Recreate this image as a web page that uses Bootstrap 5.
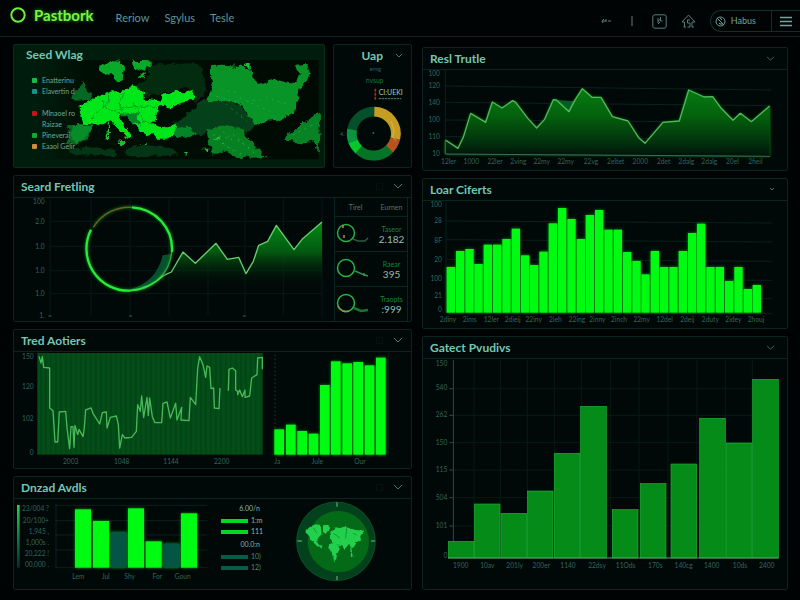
<!DOCTYPE html>
<html lang="en" data-bs-theme="dark">
<head>
<meta charset="utf-8">
<meta name="viewport" content="width=device-width, initial-scale=1">
<title>Pastbork</title>
<link href="https://cdn.jsdelivr.net/npm/bootstrap@5.3.0/dist/css/bootstrap.min.css" rel="stylesheet">
<style>
:root{--line:#0a2521;--title:#74c6b4;--label:#34635a;--neon:#00fb12}
body{background:#000304;color:var(--title);font-family:Lato,"Liberation Sans",sans-serif;font-size:12px;line-height:16px}
svg{display:block}
button{background:none;border:0;padding:0;color:inherit;font:inherit;line-height:inherit}
.topbar{height:37px;border-bottom:1px solid #10241f;background:#000405;padding:0 0 0 10px}
.brand-group{gap:22px;padding-bottom:6px}
.brand-link{gap:8px;color:#7af542;font-size:15px;font-weight:700;text-shadow:0 0 4px #2c9a10}
.menu-link{color:#5e9699;font-size:11px;padding-top:5px}
.menu{gap:15px}
.tools{gap:14px;color:#55807a;padding-top:6px}
.pill{border:1px solid #0e3029;border-right:0;border-radius:11px 0 0 11px;height:22px}
.pill-user{gap:5px;padding:0 15px 0 4px;font-size:9px;color:#76a29a}
.pill-menu{border-left:1px solid #0e3029;padding:0 8px;color:#76a29a}
.board{display:grid;grid-template-columns:399fr 366fr;gap:10px;padding:7px 12px 9px 13px}
.stack{display:flex;flex-direction:column;gap:7px;min-width:0}
.stack-right{padding-top:3px}
.top-row{display:grid;grid-template-columns:312fr 79fr;gap:8px}
.panel{border:1px solid var(--line);border-radius:2px;background:#010908;min-width:0;position:relative}
.panel-head{height:22px;padding:0 8px 0 7px;border-bottom:1px solid var(--line)}
.panel-head h2,.map-over h2{font-size:12px;line-height:16px;font-weight:700;margin:0;color:var(--title)}
.chev{color:#3f7a6d}
.ghost{width:7px;height:7px;border:1px solid #03110f;margin-right:10px}
.chart{width:100%;height:auto;overflow:visible}
.chart text{font-size:20px;fill:var(--label)}
.map-panel{background:#001c0c;border-color:#04301a}
.map-over{position:absolute;inset:0;padding:2px 0 0 12px}
.map-key{list-style:none;margin:12px 0 0;padding:0 0 0 6px;font-size:7px;line-height:11px;color:#70a896}
.map-key li{display:flex;align-items:start;gap:5px}
.map-key i{width:5px;height:5px;margin-top:3px;border-radius:1px}
.split{display:grid;grid-template-columns:320fr 77fr}
.stats{width:calc(100% - 3px);height:100%;font-size:7px;line-height:10px;border-left:1px solid var(--line);border-right:1px solid var(--line);color:#4b776e;text-align:center}
.stats tr{border-bottom:1px solid var(--line)}
.stats th{font-weight:400;height:18px}
.stats td{height:35px;padding:0}
.stats b{display:block;font-size:10px;font-weight:400;color:#94bfb4}
.stats .name{color:#15823c}
.trio{display:grid;grid-template-columns:207fr 47fr 143fr}
.rates{font-size:7px;line-height:11px;color:#86b5a8;padding-top:2px}
.rates div{display:flex;align-items:center;gap:3px}
.rates p{margin:0;text-align:right;line-height:14px}
.rates i{width:27px;height:4px;background:#00d824}
.rates .cool i{background:#075b49}
.rates .cool{color:#4b8576}
.glow{filter:drop-shadow(0 0 5px #00a010)}
</style>
</head>
<body>
<nav class="topbar d-flex justify-content-between align-items-center">
  <div class="brand-group d-flex align-items-center">
    <a href="#" class="brand-link d-flex align-items-center text-decoration-none">
      <svg width="16" height="16" viewBox="0 0 16 16" fill="none" stroke="#6df03a" stroke-width="2"><circle cx="8" cy="8" r="6.7"/></svg>Pastbork</a>
    <div class="menu d-flex">
      <a href="#" class="menu-link text-decoration-none">Reriow</a>
      <a href="#" class="menu-link text-decoration-none">Sgylus</a>
      <a href="#" class="menu-link text-decoration-none">Tesle</a>
    </div>
  </div>
  <div class="tools d-flex align-items-center">
    <button aria-label="Back"><svg width="11" height="8" viewBox="0 0 11 8" fill="none" stroke="currentColor"><path d="M1 4h4M3 2 1 4l1 2M5 2v3M7 4h3"/></svg></button>
    <button aria-label="Marker"><svg width="12" height="12" viewBox="0 0 12 12" stroke="currentColor"><path d="M6 1v10"/></svg></button>
    <button aria-label="Time"><svg width="15" height="15" viewBox="0 0 15 15" fill="none" stroke="currentColor"><rect x=".8" y=".8" width="13.4" height="13.4" rx="2"/><path d="M6 4v5M8.500 3v4h2M6 7l3-2M6 10l2-2"/></svg></button>
    <button aria-label="Home"><svg width="15" height="15" viewBox="0 0 15 15" fill="none" stroke="currentColor"><path d="M3.500 13V8H1l6.500-7L14 8h-3v5M5 13H2.500M9 6H6.500v3H9v4H6.500M13 13h-2"/></svg></button>
    <div class="pill d-flex align-items-stretch">
      <button class="pill-user d-flex align-items-center"><svg width="11" height="11" viewBox="0 0 11 11" fill="none" stroke="currentColor"><circle cx="5.500" cy="5.500" r="4.500"/><path d="m2 2 7 7M4 7l1 1h3M5 2l2 2"/></svg>Habus</button>
      <button class="pill-menu" aria-label="Menu"><svg width="12" height="11" viewBox="0 0 12 11" stroke="currentColor" stroke-width="1.400"><path d="M0 1.500h12M0 5.500h12M0 9.500h12"/></svg></button>
    </div>
  </div>
</nav>

<main class="board">
  <div class="stack">
    <div class="top-row">
      <section class="panel map-panel">
        <svg class="chart" viewBox="14 45 310 122" role="img" aria-label="Region map">
          <defs>
            <filter id="coast" x="-5%" y="-5%" width="110%" height="110%" color-interpolation-filters="sRGB"><feTurbulence type="fractalNoise" baseFrequency=".05" numOctaves="3" seed="4"/><feDisplacementMap in="SourceGraphic" scale="22" xChannelSelector="R" yChannelSelector="G"/></filter>
            <filter id="isles" x="-5%" y="-5%" width="110%" height="110%" color-interpolation-filters="sRGB"><feTurbulence type="fractalNoise" baseFrequency=".09" numOctaves="2" seed="7"/><feDisplacementMap in="SourceGraphic" scale="8" xChannelSelector="R" yChannelSelector="G"/></filter>
            <linearGradient id="sea" x1="0" x2="1"><stop offset=".02" stop-color="#001c0c"/><stop offset=".2" stop-color="#000f05"/><stop offset="1" stop-color="#000a03"/></linearGradient>
          </defs>
          <g transform="translate(10 38) scale(.33333)">
            <rect x="60" y="66" width="866" height="298" fill="url(#sea)"/>
            <g filter="url(#coast)">
              <path fill="#022b0f" d="M400 80 570 75 590 160 560 200 530 150 400 180 380 140 420 110Z"/>
              <path fill="#04401a" d="M530 228 600 175 640 180 700 210 735 260 720 280 600 285 520 295 480 262Z"/>
              <path fill="#033516" d="M170 335 260 328 320 335 310 355 200 352ZM345 335 400 320 480 330 510 352 360 355Z"/>
              <path fill="#089426" d="M603 85 635 80 700 84 722 100 728 125 745 138 790 125 855 138 868 110 858 80 890 78 900 105 890 130 868 150 865 180 850 225 815 245 770 248 735 262 715 230 700 205 650 188 595 190 590 172 612 150 600 120Z"/>
              <path fill="#078022" d="M590 275 650 260 700 275 730 320 770 358 680 360 640 340 610 350 595 320Z"/>
              <path fill="#078225" d="M930 224 926 350 915 310 870 318 825 310 835 285 870 262 900 240Z"/>
              <path fill="#056824" d="M205 145 225 130 245 185 205 188 180 185 195 165ZM165 262 250 262 235 300 200 320 170 318 180 290Z"/>
              <path fill="#088c28" d="M190 262 248 265 228 300 200 318 184 300Z"/>
              <path fill="#09aa28" d="M268 88 300 66 330 68 342 90 338 125 325 138 310 122 300 105 275 112ZM368 68 422 70 422 88 395 98 372 92ZM383 115 408 98 402 118Z"/>
              <path fill="#00e719" d="M205 205 240 190 260 175 305 160 335 160 360 145 395 150 402 185 450 190 455 170 485 165 500 152 515 165 545 152 552 180 515 196 480 208 445 200 438 245 425 255 455 268 500 260 505 285 470 302 440 302 425 285 402 292 390 275 365 245 335 228 325 240 352 272 362 294 352 303 335 280 315 260 295 250 265 260 220 258Z"/>
              <path fill="#04852a" d="M490 268 540 270 560 290 500 300ZM320 225 360 228 388 222 380 240 395 260 370 252 340 235Z"/>
              <path fill="#000c04" d="M445 215 490 210 530 225 525 240 495 235 460 250 442 240Z"/>
              <path fill="#20bd36" d="m320 307 28 5-5 12-20-8ZM390 315h20v6zM290 185h4v20h-4zM293 255h4v48h-4zM525 345h8v12zM575 335h20v6zM610 300h20v8zM705 74h14v22z"/>
              <path fill="none" stroke="#02801a" stroke-width="2" d="M265 185 300 215 340 215M340 165 330 210 400 205 440 205M300 165 285 200 240 240M370 190 400 250 430 260"/>
            </g>
            <path filter="url(#isles)" fill="none" stroke="#2ac448" stroke-width="3" stroke-dasharray="4 15" d="m620 175 70 20 80-15 70 20M635 155l50 10M610 290l80 20 55 45M640 320l60 30M625 270l50 40M650 200l60 50M850 290l70-35M620 305l60 40M670 290l60 50M690 180l90 40" opacity=".75"/>
          </g>
        </svg>
        <div class="map-over">
          <h2>Seed Wlag</h2>
          <ul class="map-key">
            <li><i style="background:#16bd4b"></i>Enatterinu</li>
            <li><i style="background:#15928a"></i>Elavertin d</li>
            <li>&nbsp;</li>
            <li><i style="background:#c5121d"></i><span>Mlnaoel ro<br>Raizae</span></li>
            <li><i style="background:#14a835"></i>Pineverai</li>
            <li><i style="background:#d58b2e"></i>Eaaol Gelir</li>
          </ul>
        </div>
      </section>
      <section class="panel">
        <div class="panel-head border-0 d-flex align-items-center justify-content-end">
          <h2 class="me-2 pe-1">Uap</h2>
          <button class="chev" aria-label="Expand"><svg width="8" height="6" viewBox="0 0 8 6" fill="none" stroke="currentColor"><path d="m1 1 3 3 3-3"/></svg></button>
        </div>
        <svg class="chart" viewBox="334 67 77 100" role="img" aria-label="Usage">
          <g transform="translate(330 40) scale(.33333)">
            <text x="136" y="92" text-anchor="middle" style="font-size:15px">ermg</text>
            <text x="134" y="130" text-anchor="middle" style="fill:#157c35">nvsup</text>
            <path d="M136 146v34" stroke="#a52a22" stroke-width="5" stroke-dasharray="9 3"/>
            <text x="146" y="165" style="fill:#9ccabd;font-size:21px">CI:UEKI</text>
            <path d="M146 176h68" stroke="#4d8577" stroke-width="3" stroke-dasharray="7 2"/>
            <g fill="none" stroke-width="29">
              <circle cx="131" cy="281" r="66" stroke="#04502a"/>
              <path stroke="#c79c22" d="M133 215A66 66 0 0 1 196 296"/>
              <path stroke="#b5521f" d="M196 296A66 66 0 0 1 178 327"/>
              <path stroke="#067426" d="M178 327A66 66 0 0 1 86 329"/>
              <path stroke="#04c72a" d="M86 329A66 66 0 0 1 69 304"/>
              <path stroke="#0a9440" d="M69 304A66 66 0 0 1 66 269"/>
              <path stroke="#e8c060" stroke-width="3" d="M184 244l8 26-4 20 10 12" opacity=".7"/>
            </g>
            <circle cx="130" cy="279" r="3" fill="#2a6b50"/>
            <text x="30" y="288" style="font-size:17px">4.</text>
          </g>
        </svg>
      </section>
    </div>

    <section class="panel">
      <div class="panel-head d-flex align-items-center"><h2 class="me-auto">Seard Fretling</h2><span class="ghost"></span><button class="chev" aria-label="Expand"><svg width="10" height="7" viewBox="0 0 10 7" fill="none" stroke="currentColor"><path d="m1 1 4 4 4-4"/></svg></button></div>
      <div class="split">
        <svg class="chart" viewBox="14 198 320 123" role="img" aria-label="Seard Fretling">
          <defs>
            <linearGradient id="fadeA" gradientUnits="userSpaceOnUse" x1="0" y1="150" x2="0" y2="350"><stop stop-color="#048a14"/><stop offset=".45" stop-color="#035810"/><stop offset="1" stop-color="#010908" stop-opacity="0"/></linearGradient>
          </defs>
          <g transform="translate(10 172) scale(.33333)">
            <path stroke="#061a17" stroke-width="3" fill="none" d="M120 148H936M120 223H936M120 296H936M120 365H936M120 80V430M243 80V430M360 80V430M477 80V430M594 80V430M705 80V430M820 80V430M936 80V440"/>
            <path fill="url(#fadeA)" d="M360 355 420 340 460 311 484 300 519 240 556 274 618 214 652 262 686 256 708 305 730 268 746 220 773 208 799 160 852 233 878 200 936 150V350H360Z"/>
            <path fill="#06502f" d="M360 352Q440 330 458 250L484 246Q480 290 455 313 410 350 360 356Z"/>
            <path fill="none" stroke="#66cf70" stroke-width="4" stroke-linejoin="round" d="M460 311 484 300 519 240 556 274 618 214 652 262 686 256 708 305 730 268 746 220 773 208 799 160 852 233 878 200 936 150"/>
            <g fill="none" class="glow">
              <path stroke="#3a9f42" stroke-width="4" d="M485 240A126 126 0 0 1 360 356"/>
              <path stroke="#755d29" stroke-width="4" d="M250 166A126 126 0 0 1 366 106"/>
              <path stroke="#27eb3a" stroke-width="7" d="M366 106A126 126 0 0 1 486 240M243 173A126 126 0 0 0 360 356"/>
              <path stroke="#35dc45" stroke-width="5" d="M360 356Q415 352 460 311"/>
            </g>
            <g id="labA"></g>
          </g>
        </svg>
        <table class="stats">
          <thead><tr><th>Tirel</th><th>Eurnen</th></tr></thead>
          <tbody>
            <tr><td><svg width="34" height="24" viewBox="0 0 34 24" fill="none" stroke="#2cab43" stroke-width="1.500"><circle cx="11" cy="11" r="8.500"/><path stroke="#b08b45" d="M8 3v3M9 13v3"/><path stroke="#2b5b45" d="m18 17 5 2h7l3-3"/></svg></td><td><span class="name">Taseor</span><b>2.182</b></td></tr>
            <tr><td><svg width="34" height="24" viewBox="0 0 34 24" fill="none" stroke="#20b743" stroke-width="1.500"><circle cx="11" cy="11" r="8.500"/><path stroke="#2e9150" d="m20 14 7 3 6 2M29 16v3"/></svg></td><td><span class="name">Raear</span><b>395</b></td></tr>
            <tr class="border-0"><td><svg width="34" height="24" viewBox="0 0 34 24" fill="none" stroke="#25b943" stroke-width="1.500"><circle cx="11" cy="11" r="8.500"/><path stroke="#8b944c" d="M3 14a8.500 8.500 0 0 0 11 5"/><path stroke="#17733a" stroke-width="2.500" d="m19 16 7 3 7-1"/></svg></td><td><span class="name">Traopts</span><b>:999</b></td></tr>
          </tbody>
        </table>
      </div>
    </section>

    <section class="panel">
      <div class="panel-head d-flex align-items-center"><h2 class="me-auto">Tred Aotiers</h2><span class="ghost"></span><button class="chev" aria-label="Expand"><svg width="10" height="7" viewBox="0 0 10 7" fill="none" stroke="currentColor"><path d="m1 1 4 4 4-4"/></svg></button></div>
      <svg class="chart" viewBox="14 352 397 116" role="img" aria-label="Tred Aotiers">
        <defs><pattern id="stripe" width="15" height="12" patternUnits="userSpaceOnUse"><rect width="15" height="12" fill="#034d19"/><rect width="5" height="12" fill="#034416"/></pattern></defs>
        <g transform="translate(5 328) scale(.33333)">
          <rect x="97" y="75" width="676" height="305" fill="url(#stripe)"/>
          <path fill="none" stroke="#48b958" stroke-width="4" stroke-linejoin="round" d="M102 85 108 105 112 86 116 118 134 120V240L144 248 150 342H158L163 252 182 250 186 300 194 362 198 296H204L207 358 210 292 218 320 222 304 234 326 238 300 242 246 258 240 264 256 284 288 292 254 304 252 306 300 316 268 334 264 340 290 344 360 352 320 360 330 380 328 394 310 398 230 406 250 410 204 416 268 426 208 430 262 434 210 442 266 450 284H470L474 226 486 222 496 270 512 226 516 276 530 238 528 276 552 278 556 208 572 230 578 120 584 86 594 110 602 148 606 114 614 118 618 182 626 180 628 240 642 242 645 180M670 188 672 124 682 120 692 128V186L698 190V200L704 186 712 206 720 186V208L734 204 740 150 756 140 758 90 772 88V124"/>
          <path stroke="#24443d" stroke-width="3" stroke-dasharray="4 8" d="M810 80V300"/>
          <path stroke="#06201b" stroke-width="3" d="M1150 76V380"/>
          <g id="barsB" class="glow"></g><g id="labB"></g>
        </g>
      </svg>
    </section>

    <section class="panel">
      <div class="panel-head d-flex align-items-center"><h2 class="me-auto">Dnzad Avdls</h2><span class="ghost"></span><button class="chev" aria-label="Expand"><svg width="10" height="7" viewBox="0 0 10 7" fill="none" stroke="currentColor"><path d="m1 1 4 4 4-4"/></svg></button></div>
      <div class="trio">
        <svg class="chart" viewBox="14 499 207 90" role="img" aria-label="Dnzad Avdls">
          <defs><linearGradient id="scale" x1="0" x2="0" y1="0" y2="1"><stop stop-color="#1ed44b"/><stop offset=".6" stop-color="#0b6e48"/><stop offset="1" stop-color="#082f28"/></linearGradient></defs>
          <g transform="translate(5 470) scale(.33333)">
            <rect x="36" y="105" width="8" height="188" fill="url(#scale)"/>
            <path stroke="#0a211d" stroke-width="3" fill="none" d="M150 106H607M150 152H607M150 195H607M150 240H607M150 293H607M153 100V293"/>
            <g id="barsC" class="glow"></g><g id="labC"></g>
          </g>
        </svg>
        <div class="rates">
          <p class="pe-2">6.00/n</p>
          <div><i></i>1:m</div><div><i></i>111</div>
          <p class="pe-2">00.0:n</p>
          <div class="cool"><i></i>10)</div><div class="cool"><i></i>12)</div>
        </div>
        <svg class="chart" viewBox="268 499 143 90" role="img" aria-label="World">
          <g transform="translate(5 470) scale(.33333)">
            <circle cx="993" cy="214" r="119" fill="#02411b"/><circle cx="993" cy="214" r="118" fill="none" stroke="#0a5a2c" stroke-width="2"/>
            <circle cx="1000" cy="215" r="92" fill="#046a18"/>
            <path stroke="#77b891" stroke-width="3" d="M996 97v13M996 318v12M877 213h14M1098 213h12"/>
            <g fill="#22d04e" filter="url(#isles)">
              <path d="m901 187 10-14 20-10 14 2 3 10 2 18-8 8-6 10-4 8-14-8-6-14ZM954 166l20-2 1 12-15 17-6-8ZM926 208l10 8 8 12-6 2-12-12ZM974 196l4-12 10-4 4-8 14 2 12-4 14 4 20 6 26 2-12 16 2 14-14 4-6 16-8 2-8-12-8 10-6 8-6-14-12-2-10 2-8-8ZM970 230l8-10 20 3 6 14-8 16-2 14-6 6-6-18-2-10-8-6ZM1036 226l4 14 2 14 4 8-8-2-2-18ZM943 224l8 4-1 8-6-6Z"/>
            </g>
            <path stroke="#04801d" stroke-width="2" fill="none" d="m925 173 10 16M985 190l20 14M1025 175l-3 30M1045 190l10 5"/>
          </g>
        </svg>
      </div>
    </section>
  </div>

  <div class="stack stack-right">
    <section class="panel">
      <div class="panel-head d-flex align-items-center"><h2 class="me-auto">Resl Trutle</h2><button class="chev me-1" aria-label="Expand"><svg width="9" height="6" viewBox="0 0 10 7" fill="none" stroke="currentColor"><path d="m1 1 4 4 4-4"/></svg></button></div>
      <svg class="chart" viewBox="423 70 364 100" role="img" aria-label="Resl Trutle">
        <defs><linearGradient id="fadeD" x1="0" x2="0" y1="0" y2="1"><stop stop-color="#067d12"/><stop offset=".4" stop-color="#04610d"/><stop offset=".85" stop-color="#012a0c"/><stop offset="1" stop-color="#011009"/></linearGradient></defs>
        <g transform="translate(418 40) scale(.33333)">
          <path stroke="#08231e" stroke-width="3" fill="none" d="M82 138 1060 150M82 187 1060 197M82 240 1060 247M82 290 1060 298M82 90V342"/>
          <path fill="#045c22" d="M406 179 460 183 470 182 453 215Z"/>
          <path class="glow" fill="url(#fadeD)" d="M82 342V300L120 325 136 292 158 220 203 247 223 186 252 204 284 182 293 187 330 236 356 264 380 238 406 179 415 180 453 215 470 182 493 146 522 172H549L583 230 630 243 662 293 681 310 735 247 784 243 812 150 858 171 884 170 908 203 945 241 967 220 1000 245 1055 198V348Z"/>
          <path fill="none" stroke="#52b85b" stroke-width="4" stroke-linejoin="round" d="M82 300 120 325 136 292 158 220 203 247 223 186 252 204 284 182 293 187 330 236 356 264 380 238 406 179 415 180 453 215 470 182 493 146 522 172H549L583 230 630 243 662 293 681 310 735 247 784 243 812 150 858 171 884 170 908 203 945 241 967 220 1000 245 1055 198"/>
          <path stroke="#3a6c5c" stroke-width="3" fill="none" d="M82 300V342L1056 349"/>
          <g id="labD"></g>
        </g>
      </svg>
    </section>

    <section class="panel">
      <div class="panel-head d-flex align-items-center"><h2 class="me-auto">Loar Ciferts</h2><button class="chev me-1" aria-label="Expand"><svg width="6" height="5" viewBox="0 0 6 5" fill="none" stroke="currentColor"><path d="m1 1 2 2 2-2"/></svg></button></div>
      <svg class="chart" viewBox="423 201 364 127" role="img" aria-label="Loar Ciferts">
        <g transform="translate(418 172) scale(.33333)">
          <path stroke="#08211d" stroke-width="3" fill="none" d="M86 147 1062 153M86 203 1062 210M86 262 1062 268M86 320 1062 325M86 374 1062 380M84 90V421L1062 425"/>
          <g id="barsE" class="glow"></g><g id="labE"></g>
        </g>
      </svg>
    </section>

    <section class="panel">
      <div class="panel-head d-flex align-items-center"><h2 class="me-auto">Gatect Pvudivs</h2><button class="chev me-1" aria-label="Expand"><svg width="9" height="6" viewBox="0 0 10 7" fill="none" stroke="currentColor"><path d="m1 1 4 4 4-4"/></svg></button></div>
      <svg class="chart" viewBox="423 359 364 230" role="img" aria-label="Gatect Pvudivs">
        <g transform="translate(418 332) scale(.33333)">
          <path stroke="#061b16" stroke-width="3" fill="none" d="M106 170H1080M106 250H1080M106 332H1080M106 414H1080M106 497H1080M106 582H1080M168 84V678M247 84V678M328 84V678M409 84V678M490 84V678M578 84V678M663 84V678M750 84V678M837 84V678M922 84V678M1003 84V678"/>
          <path stroke="#1f5146" stroke-width="3" fill="none" d="M106 84V628M94 170h12M94 250h12M94 332h12M94 414h12M94 497h12M94 582h12"/>
          <g id="barsF"></g>
          <path stroke="#5f9c63" stroke-width="3" d="M90 678H1082"/>
          <g id="labF"></g>
        </g>
      </svg>
    </section>
  </div>
</main>

<script src="https://cdn.jsdelivr.net/npm/bootstrap@5.3.0/dist/js/bootstrap.bundle.min.js"></script>
<script>
const NS = 'http://www.w3.org/2000/svg';
function add(id, tag, attrs, text) {
  const el = document.createElementNS(NS, tag);
  for (const k in attrs) el.setAttribute(k, attrs[k]);
  if (text) el.textContent = text;
  document.getElementById(id).appendChild(el);
}
// Bars: left edges and tops in chart units, sharing one width and base line
function bars(id, xs, tops, width, base, color, extra = {}) {
  tops.forEach((t, i) => add(id, 'rect', {x: xs[i], y: t, width, height: base - t, fill: typeof color === 'string' ? color : color(i), ...extra}));
}
function yLabels(id, x, ys, words) { words.forEach((w, i) => add(id, 'text', {x, y: ys[i] + 7, 'text-anchor': 'end'}, w)); }
function xLabels(id, y, xs, words) { words.forEach((w, i) => add(id, 'text', {x: xs[i], y: y + 7, 'text-anchor': 'middle'}, w)); }

yLabels('labA', 104, [90, 150, 225, 296, 365, 432], ['100', '2.0', '1.0', '1.0', '1.0', '1.']);
xLabels('labA', 430, [120, 361, 703], ['=', '=', '=']);

bars('barsB', [808, 843, 877, 911, 945, 978, 1012, 1045, 1079, 1113], [304, 290, 309, 317, 171, 100, 106, 102, 112, 89], 29, 380, '#00fb12');
yLabels('labB', 86, [86, 176, 271, 374], ['150', '120', '102', '0']);
xLabels('labB', 401, [197, 350, 498, 650, 817, 937, 1065], ['2003', '1048', '1144', '2200', 'Ja', 'Jule', 'Our']);

bars('barsC', [210, 264, 316, 369, 422, 475, 528], [118, 153, 186, 115, 214, 221, 130], 48, 293, i => i === 2 || i === 5 ? '#055545' : '#00fb12');
yLabels('labC', 132, [115, 151, 186, 217, 250, 285], ['23/004 ?', '20/100+', '1,945 ,', '1,000s  .', '20,222 !', '00,000 .']);
xLabels('labC', 320, [220, 302, 374, 457, 533], ['Lem', 'Jul', 'Shy', 'For', 'Goun']);

yLabels('labD', 66, [102, 138, 188, 240, 290, 341], ['100', '120', '140', '100', '110', '10']);
xLabels('labD', 365, [92, 160, 231, 301, 371, 443, 519, 593, 667, 737, 805, 874, 943, 1012],
  ['12ler', '1000', '22ler', '2ving', '22my', '22my', '22vg', '2eltet', '2000', '2det', '2dalg', '2dalg', '20el', '2fieil']);

bars('barsE', Array.from({length: 34}, (_, i) => Math.round(86 + i * 27.83)),
  [285, 237, 231, 276, 218, 218, 201, 170, 250, 279, 239, 154, 108, 141, 201, 129, 114, 173, 173, 240, 267, 307, 237, 285, 285, 237, 183, 155, 285, 285, 327, 285, 351, 339], 25, 422, '#00fb12');
yLabels('labE', 72, [99, 147, 205, 262, 321, 370, 414], ['100', '28', '8F', '20', '100', '21', '0']);
xLabels('labE', 444, [90, 155, 220, 284, 347, 412, 477, 538, 603, 671, 740, 808, 877, 946, 1014],
  ['2diny', '2ims', '12ler', '2dieij', '22iny', '2ieh', '22ing', '2inny', '2inch', '22my', '12del', '2deij', '2duty', '2idey', '2houj']);

bars('barsF', [91, 169, 249, 328, 409, 488, 583, 667, 759, 845, 925, 1004], [628, 516, 544, 477, 364, 223, 533, 455, 396, 259, 333, 142], 77, 678, '#058c18', {stroke: '#1dae35', 'stroke-width': 2});
yLabels('labF', 88, [94, 168, 249, 332, 414, 497, 582, 670], ['150', '540', '262', '150', '115', '504', '101', '0']);
xLabels('labF', 701, [128, 208, 290, 370, 450, 537, 623, 712, 797, 881, 966, 1046],
  ['1900', '10av', '201ly', '200er', '1140', '22dsy', '11Ods', '170s', '140cg', '1400', '10ds', '2400']);
</script>
</body>
</html>
